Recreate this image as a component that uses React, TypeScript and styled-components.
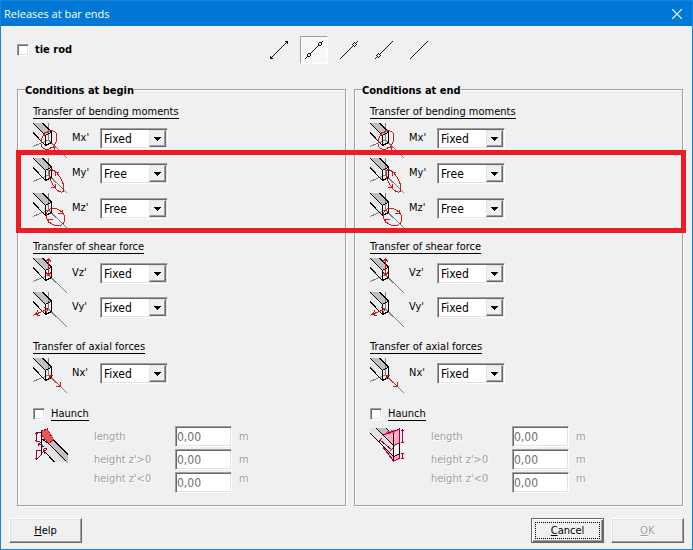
import React, { useState } from "react";
import styled, { createGlobalStyle, css } from "styled-components";

const GlobalStyle = createGlobalStyle`
  * { box-sizing: border-box; }
  body {
    margin: 0;
    background: #f0f0f0;
    color: #000;
    font: 11px/14px "DejaVu Sans Condensed", Tahoma, "DejaVu Sans", sans-serif;
  }
  button, input, select { font: inherit; color: inherit; margin: 0; }
`;

const underlined = css`
  border-bottom: 1px solid #000;
  line-height: 12px;
`;

const sunken = css`
  border: 1px solid;
  border-color: #a0a0a0 #fff #fff #a0a0a0;
  box-shadow: inset 1px 1px 0 #696969, inset -1px -1px 0 #e3e3e3;
`;

const Window = styled.div`
  display: flex;
  flex-direction: column;
  min-height: 100vh;
  border: 1px solid #1883d7;
  background: #f0f0f0;
`;

const TitleBar = styled.header`
  display: flex;
  align-items: center;
  justify-content: space-between;
  height: 25px;
  padding: 0 10px 0 3px;
  background: #0078d7;
  color: #fff;
`;

const Title = styled.h1`
  margin: 0;
  font: 11px/16px "Open Sans", "Noto Sans", sans-serif;
`;

const CloseButton = styled.button`
  display: flex;
  padding: 0;
  border: 0;
  background: none;
`;

const Toolbar = styled.div`
  display: grid;
  grid-template-columns: 248px auto;
  align-items: center;
  padding: 10px 16px 0;
`;

const Check = styled.label<{ $bold?: boolean; $underline?: boolean }>`
  display: flex;
  align-items: center;
  gap: 6px;
  height: 14px;
  font-weight: ${(p) => (p.$bold ? "bold" : "normal")};
  span { ${(p) => p.$underline && underlined} }
`;

const CheckInput = styled.input`
  appearance: none;
  width: 12px;
  height: 12px;
  background: #fff;
  ${sunken}
  &:checked { background: #000; background-clip: content-box; padding: 2px; }
`;

const ToolGroup = styled.div`
  display: flex;
  gap: 7px;
`;

const ToolButton = styled.button<{ $pressed: boolean }>`
  display: flex;
  align-items: center;
  justify-content: center;
  width: 28px;
  height: 28px;
  padding: 0;
  border: 1px solid transparent;
  background: none;
  ${(p) =>
    p.$pressed &&
    css`
      border-color: #a0a0a0 #fff #fff #a0a0a0;
      background: #f8f8f8;
    `}
`;

const Columns = styled.main`
  position: relative;
  display: grid;
  grid-template-columns: 1fr 1fr;
  gap: 8px;
  padding: 16px 9px 0 16px;
`;

const Group = styled.fieldset`
  min-width: 0;
  margin: 0;
  padding: 8px 15px 12px;
  border: 1px solid #a0a0a0;
  box-shadow: 1px 1px 0 #fff, inset 1px 1px 0 #fff;
`;

const GroupTitle = styled.legend`
  margin-left: -8px;
  padding: 4px 0 0;
  background: #f0f0f0;
  font-weight: bold;
`;

const Section = styled.section<{ $gap: number }>`
  margin-bottom: ${(p) => p.$gap}px;
`;

const SectionTitle = styled.h2`
  display: table;
  margin: 0 0 4px;
  font-size: 11px;
  font-weight: normal;
  ${underlined}
`;

const ConditionRow = styled.label<{ $height: number }>`
  display: grid;
  grid-template-columns: 39px 28px 68px;
  align-items: start;
  height: ${(p) => p.$height}px;
`;

const LoadName = styled.span`
  line-height: 30px;
`;

const SelectBox = styled.span`
  position: relative;
  display: block;
  margin-top: 5px;
`;

const Select = styled.select`
  appearance: none;
  display: block;
  width: 100%;
  height: 21px;
  padding: 0 18px 0 3px;
  border-radius: 0;
  background: #fff;
  font-size: 12px;
  ${sunken}
`;

const DropMark = styled.span`
  position: absolute;
  top: 2px;
  right: 2px;
  bottom: 2px;
  display: flex;
  align-items: center;
  justify-content: center;
  width: 17px;
  border: 1px solid;
  border-color: #e3e3e3 #696969 #696969 #e3e3e3;
  background: #f0f0f0;
  box-shadow: inset -1px -1px 0 #a0a0a0;
  pointer-events: none;
`;

const HaunchBody = styled.div`
  display: grid;
  grid-template-columns: 61px 1fr;
  margin-top: 5px;
  > svg { margin-top: 2px; }
`;

const Fields = styled.div`
  display: grid;
  gap: 2px;
`;

const Field = styled.label`
  display: grid;
  grid-template-columns: 81px 57px auto;
  align-items: center;
  height: 21px;
  color: #a0a0a0;
  text-shadow: 1px 1px 0 #fff;
  &:last-child { align-items: start; }
`;

const Unit = styled.span`
  padding-left: 7px;
`;

const FieldInput = styled.input`
  width: 100%;
  height: 21px;
  padding: 0 1px;
  background: #fff;
  color: #6d6d6d;
  font-size: 12px;
  ${sunken}
`;

const Footer = styled.footer`
  display: flex;
  gap: 7px;
  padding: 12px 8px 6px;
`;

const Spacer = styled.span`
  flex: 1;
`;

const Button = styled.button<{ $focus?: boolean }>`
  width: 73px;
  height: 25px;
  padding: 0;
  border: 1px solid;
  border-color: #fff #696969 #696969 #fff;
  background: #f0f0f0;
  box-shadow: inset -1px -1px 0 #a0a0a0, inset 1px 1px 0 #e3e3e3;
  &:disabled { color: #a0a0a0; text-shadow: 1px 1px 0 #fff; }
  ${(p) =>
    p.$focus &&
    css`
      border-color: #696969;
      box-shadow: inset 1px 1px 0 #fff, inset -1px -1px 0 #696969, inset -2px -2px 0 #a0a0a0;
      outline: 1px dotted #000;
      outline-offset: -5px;
    `}
`;

const Highlight = styled.div`
  position: absolute;
  top: 86px;
  left: 15px;
  right: 6px;
  height: 83px;
  border: 5px solid #ed1c24;
  pointer-events: none;
`;

type Load = "Mx'" | "My'" | "Mz'" | "Vz'" | "Vy'" | "Nx'";

const loadPaths: Record<Load, React.ReactNode> = {
  "Mx'": (
    <>
      <ellipse cx="16" cy="17" rx="7.500" ry="10" transform="rotate(28 16 17)" />
      <path d="M11 13V9.500H15M17 24.500h4V28" />
    </>
  ),
  "My'": (
    <>
      <ellipse cx="23.500" cy="23" rx="5" ry="12.500" transform="rotate(-29 23.500 23)" />
      <path d="M22 18v-4h4M18 29.500h4V26" />
    </>
  ),
  "Mz'": (
    <>
      <ellipse cx="22.500" cy="24" rx="10" ry="8" transform="rotate(35 22.500 24)" />
      <path d="M24.500 20.500h5v-4M15.500 30v-4h4" />
    </>
  ),
  "Vz'": <path d="M15.500 1v16M13 3.500 15.500 1 18 3.500M13 14.500l2.500 2.500 2.500-2.500" />,
  "Vy'": <path d="M2 22.500 15 17M5 18.500 2 22.500l5 1M11.500 15.500l3.500 1.500-2 3.500" />,
  "Nx'": <path d="M16 17 27.500 28.500M16 21v-4h4M27.500 24v4.500H23" />,
};

function BeamIcon({ load }: { load: Load }) {
  return (
    <svg width="34" height="35" viewBox="0 0 34 35" fill="none" shapeRendering="crispEdges" aria-hidden="true">
      <path d="M0 0 12.500 12.500V22L0 9.500Z" fill="#e9e9e9" />
      <path d="M0 0H9.500L18.500 9 12.500 12.500Z" fill="#c0c0c0" />
      <path d="M15.500 0V17L0 23.500M15.500 17 34 35" stroke="#808080" />
      <path d="M0 0 12.500 12.500V22.500L0 9.500M9.500 0 18.500 9V19.500L12.500 22.500M12.500 12.500 18.500 9" stroke="#000" />
      <g stroke="#d01818">{loadPaths[load]}</g>
    </svg>
  );
}

function HaunchIcon({ end }: { end: boolean }) {
  return end ? (
    <svg width="35" height="35" viewBox="0 0 35 35" fill="none" shapeRendering="crispEdges" aria-hidden="true">
      <path d="M0 0H6L24 17V29L0 5Z" fill="#e3e3e3" />
      <path d="M7 0h9l5 5-8 2Z" fill="#c0c0c0" />
      <path d="M13 7 30 1V15l-6 2.500Z" fill="#ffa8c8" />
      <path d="m14 6.500 4-3.500 12-2-6 4Z" fill="#ee5555" />
      <path d="m13 19 11 10 6-3v5l-6 2.500Z" fill="#ffa8c8" />
      <path d="m6 0 17.500 17.500V33M23.500 17V5M0 5l23.500 23.500 6-2.500V15M16 0l3 3" stroke="#000" />
      <path d="m13 7 16.500-6v14l-6 2.500M13 19l10.500 14 6-2.500V26M10 12l12 10M9 14l3-4M20 23l3-3M32.500 1v14M31 2.500h3M31 14.500h3M32.500 24.500V31M31 25.500h3M31 30.500h3" stroke="#a00038" />
    </svg>
  ) : (
    <svg width="35" height="35" viewBox="0 0 35 35" fill="none" shapeRendering="crispEdges" aria-hidden="true">
      <path d="m8 9 8 6 17 19H20L8 22Z" fill="#e3e3e3" />
      <path d="m15.500 15.500 4-4L35 27v8h-2Z" fill="#c0c0c0" />
      <path d="m8.500 3 6-2 6 11-5 3.500-7-8Z" fill="#ee5555" stroke="#a00038" strokeDasharray="2 1" />
      <path d="M8.500 4v23M11 23l10.500 11M9 11l6.500 4.500L33 33M20.500 12 35 26.500" stroke="#000" />
      <path d="M8 4.500H3.500v9H7M2 6l1.500-1.500L5 6M2 12l1.500 1.500M5 15l6 4M5 18l3-4M8 22.500H3.500v9L8 27M2 30l1.500 1.500M9 25l5-4M10 21l2 5M11 20h3" stroke="#a00038" />
    </svg>
  );
}

const diagonal = <path d="M4.500 23.500 24 4" />;

const barKinds = [
  { name: "Tie rod", path: <path d="M4.500 23.500 23.500 4.500M4.500 20v3.500H8M20 4.500h3.500V8" />, dots: [] },
  { name: "Hinged at both ends", path: diagonal, dots: [[8.500, 19.500], [20.500, 7.500]] },
  { name: "Hinged at end", path: diagonal, dots: [[20, 8]] },
  { name: "Hinged at begin", path: diagonal, dots: [[8, 20]] },
  { name: "Fixed at both ends", path: diagonal, dots: [] },
];

const sections: { title: string; gap: number; rowHeight: number; rows: [Load, string][] }[] = [
  {
    title: "Transfer of bending moments",
    gap: 13,
    rowHeight: 35,
    rows: [["Mx'", "Fixed"], ["My'", "Free"], ["Mz'", "Free"]],
  },
  { title: "Transfer of shear force", gap: 15, rowHeight: 34, rows: [["Vz'", "Fixed"], ["Vy'", "Fixed"]] },
  { title: "Transfer of axial forces", gap: 14, rowHeight: 35, rows: [["Nx'", "Fixed"]] },
];

function Conditions({ title, end = false }: { title: string; end?: boolean }) {
  return (
    <Group>
      <GroupTitle>{title}</GroupTitle>
      {sections.map((s) => (
        <Section key={s.title} $gap={s.gap}>
          <SectionTitle>{s.title}</SectionTitle>
          {s.rows.map(([load, value]) => (
            <ConditionRow key={load} $height={s.rowHeight}>
              <BeamIcon load={load} />
              <LoadName>{load}</LoadName>
              <SelectBox>
                <Select defaultValue={value}>
                  <option>Fixed</option>
                  <option>Free</option>
                </Select>
                <DropMark>
                  <svg width="7" height="4" viewBox="0 0 7 4" shapeRendering="crispEdges" aria-hidden="true">
                    <path d="M0 0h7v1H0ZM1 1h5v1H1ZM2 2h3v1H2ZM3 3h1v1H3Z" />
                  </svg>
                </DropMark>
              </SelectBox>
            </ConditionRow>
          ))}
        </Section>
      ))}
      <Check $underline>
        <CheckInput type="checkbox" />
        <span>Haunch</span>
      </Check>
      <HaunchBody>
        <HaunchIcon end={end} />
        <Fields>
          {["length", "height z'>0", "height z'<0"].map((name) => (
            <Field key={name}>
              <span>{name}</span>
              <FieldInput defaultValue="0,00" disabled />
              <Unit>m</Unit>
            </Field>
          ))}
        </Fields>
      </HaunchBody>
    </Group>
  );
}

export default function App() {
  const [kind, setKind] = useState(1);
  return (
    <Window>
      <GlobalStyle />
      <TitleBar>
        <Title>Releases at bar ends</Title>
        <CloseButton aria-label="Close">
          <svg width="10" height="10" viewBox="0 0 10 10" stroke="#fff" strokeWidth="1.200" aria-hidden="true">
            <path d="m0 0 10 10M10 0 0 10" />
          </svg>
        </CloseButton>
      </TitleBar>
      <Toolbar>
        <Check $bold>
          <CheckInput type="checkbox" />
          <span>tie rod</span>
        </Check>
        <ToolGroup>
          {barKinds.map((b, i) => (
            <ToolButton key={b.name} aria-label={b.name} $pressed={kind === i} onClick={() => setKind(i)}>
              <svg width="28" height="28" viewBox="0 0 28 28" fill="none" stroke="#000" shapeRendering="crispEdges" aria-hidden="true">
                {b.path}
                {b.dots.map(([x, y]) => (
                  <circle key={x} cx={x} cy={y} r="1.800" fill="#f0f0f0" />
                ))}
              </svg>
            </ToolButton>
          ))}
        </ToolGroup>
      </Toolbar>
      <Columns>
        <Conditions title="Conditions at begin" />
        <Conditions title="Conditions at end" end />
        <Highlight />
      </Columns>
      <Footer>
        <Button><u>H</u>elp</Button>
        <Spacer />
        <Button $focus><u>C</u>ancel</Button>
        <Button disabled><u>O</u>K</Button>
      </Footer>
    </Window>
  );
}
